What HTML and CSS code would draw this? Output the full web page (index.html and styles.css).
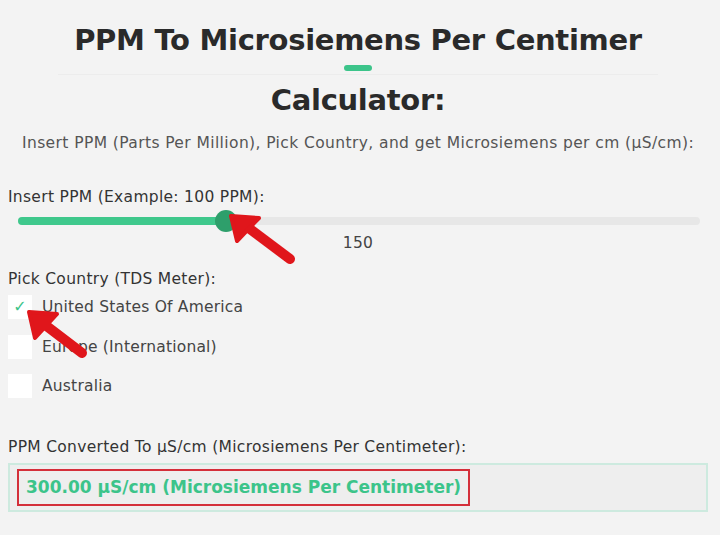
FILE: index.html
```
<!DOCTYPE html>
<html lang="en">
<head>
  <meta charset="UTF-8" />
  <meta name="viewport" content="width=device-width, initial-scale=1.0"/>
  <title>PPM To Microsiemens Calculator</title>
  <link rel="stylesheet" href="styles.css">
</head>
<body>

  <div class="calc">
    <h1 class="title">PPM To Microsiemens Per Centimer</h1>
    <div class="divider"><span></span></div>
    <h1 class="title title-second">Calculator:</h1>
    <p class="intro">Insert PPM (Parts Per Million), Pick Country, and get Microsiemens per cm (µS/cm):</p>

    <label class="field-label ppm-label" for="ppm">Insert PPM (Example: 100 PPM):</label>
    <div class="slider">
      <div class="track"><div class="fill" style="width: 30.5%"></div></div>
      <div class="thumb" style="left: 30.5%"></div>
      <svg class="arrow arrow-slider" width="76" height="54" viewBox="0 0 76 54">
        <path d="M62 46 L14 10" stroke="#e0161b" stroke-width="10" stroke-linecap="round" fill="none"/>
        <path d="M3 3 L31 5 L9 28 Z" fill="#e0161b" stroke="#e0161b" stroke-width="4" stroke-linejoin="round"/>
      </svg>
    </div>
    <div class="slider-value">150</div>

    <div class="field-label country-label">Pick Country (TDS Meter):</div>
    <ul class="countries">
      <li><span class="box checked">✓</span>United States Of America</li>
      <li><span class="box"></span>Europe (International)</li>
      <li><span class="box"></span>Australia</li>
    </ul>
    <svg class="arrow arrow-check" width="70" height="56" viewBox="0 0 70 56">
      <path d="M56 44 L14 12" stroke="#e0161b" stroke-width="10" stroke-linecap="round" fill="none"/>
      <path d="M3 3 L31 5 L9 29 Z" fill="#e0161b" stroke="#e0161b" stroke-width="4" stroke-linejoin="round"/>
    </svg>

    <div class="field-label result-label">PPM Converted To µS/cm (Microsiemens Per Centimeter):</div>
    <div class="result">
      <span class="result-value">300.00 µS/cm (Microsiemens Per Centimeter)</span>
    </div>
  </div>

</body>
</html>
```

FILE: styles.css
```
body {
  margin: 0;
  background: #f3f3f3;
  font-family: "DejaVu Sans", "Open Sans", sans-serif;
  color: #333;
}
.calc {
  position: relative;
  padding: 18px 12px 20px 8px;
}
.title {
  margin: 0;
  text-align: center;
  font-size: 29px;
  line-height: 44px;
  font-weight: 700;
  color: #2a2a2a;
  letter-spacing: -0.3px;
}
.title-second {
  margin-top: 3px;
}
.divider {
  height: 9px;
  margin: 3px 50px 0;
  border-bottom: 1px solid #ececec;
  display: flex;
  justify-content: center;
}
.divider span {
  width: 28px;
  height: 6px;
  border-radius: 3px;
  background: #3cc48a;
}
.intro {
  margin: 11px 0 0;
  text-align: center;
  font-size: 15.5px;
  line-height: 20px;
  letter-spacing: 0.4px;
  color: #555;
}
.field-label {
  display: block;
  font-size: 15.5px;
  line-height: 20px;
  letter-spacing: 0.3px;
  color: #333;
}
.ppm-label {
  margin-top: 34px;
}
.slider {
  position: relative;
  height: 26px;
  margin: 0 8px 0 10px;
}
.track {
  position: absolute;
  left: 0; right: 0;
  top: 10px;
  height: 8px;
  border-radius: 4px;
  background: #e7e7e7;
}
.fill {
  height: 100%;
  border-radius: 4px;
  background: #3fc88c;
}
.thumb {
  position: absolute;
  top: 3px;
  width: 22px;
  height: 22px;
  margin-left: -11px;
  border-radius: 50%;
  background: #2e9f6b;
}
.slider-value {
  text-align: center;
  font-size: 15.5px;
  line-height: 20px;
  letter-spacing: 0.3px;
  color: #444;
}
.country-label {
  margin-top: 16px;
}
.countries {
  list-style: none;
  margin: 6px 0 0;
  padding: 0;
}
.countries li {
  display: flex;
  align-items: center;
  gap: 10px;
  height: 24px;
  margin-bottom: 15.5px;
  font-size: 15.5px;
  letter-spacing: 0.2px;
  color: #444;
}
.countries li:last-child {
  margin-bottom: 0;
}
.box {
  width: 24px;
  height: 24px;
  background: #fff;
  color: #3cc48a;
  font-size: 16px;
  line-height: 24px;
  text-align: center;
}
.result-label {
  margin-top: 39px;
}
.result {
  margin-top: 6px;
  padding: 4px 7px;
  border: 2px solid #cdeadf;
  background: #eeeeee;
}
.result-value {
  display: inline-block;
  padding: 6px 7px;
  line-height: 21px;
  border: 2px solid #d42f3a;
  font-size: 17px;
  font-weight: 700;
  color: #3cc48a;
}
.arrow {
  position: absolute;
}
.arrow-slider {
  left: 210px;
  top: 6px;
}
.arrow-check {
  left: 26px;
  top: 309px;
}
```
